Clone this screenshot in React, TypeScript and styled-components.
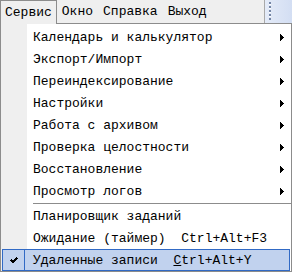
import React from 'react'
import styled, { createGlobalStyle, css } from 'styled-components'

const GlobalStyle = createGlobalStyle`
  html, body {
    margin: 0;
    padding: 0;
    background: #ffffff;
    overflow: hidden;
  }
`

const Screen = styled.div`
  width: 292px;
  height: 272px;
  display: flex;
  flex-direction: column;
  font-family: 'Liberation Mono', 'DejaVu Sans Mono', monospace;
  font-size: 13px;
  color: #000000;
`

const MenuBar = styled.div`
  display: flex;
  height: 23px;
  background: #efefef;
  position: relative;
  z-index: 2;
`

const TopItem = styled.div<{ $open?: boolean }>`
  box-sizing: border-box;
  height: 23px;
  padding: 0 5px;
  line-height: 24px;
  white-space: pre;
  ${(p) =>
    p.$open &&
    css`
      height: 24px;
      padding: 0 4px;
      line-height: 23px;
      border: 1px solid #8c8c8c;
      border-bottom: none;
      background: #efefef;
    `}
`

const BarFill = styled.div`
  flex: 1;
`

const ToolbarStub = styled.div`
  width: 28px;
  border-left: 1px solid #a9a9a9;
  background: linear-gradient(to right, #e4ebf8, #d3def3);
  display: flex;
  padding: 2px 0 0 4px;
  box-sizing: border-box;
`

const Grip = styled.div`
  width: 2px;
  height: 18px;
  background: repeating-linear-gradient(to bottom, #7586a6 0 2px, #ffffff 2px 3px, transparent 3px 4px);
`

const Popup = styled.div`
  flex: 1;
  box-sizing: border-box;
  border: 1px solid #8c8c8c;
  padding-top: 2px;
  background: linear-gradient(to right, #efefef 26px, #ffffff 26px);
  display: flex;
  flex-direction: column;
`

const Row = styled.div<{ $active?: boolean }>`
  display: flex;
  align-items: center;
  box-sizing: border-box;
  height: 22px;
  padding: 0 6px 0 32px;
  ${(p) =>
    p.$active &&
    css`
      margin: 0 1px;
      padding: 0 6px 0 0;
      border: 1px solid #316ac5;
      background: #c1d2ee;
    `}
`

const Label = styled.span`
  white-space: pre;
`

const CheckCell = styled.div`
  width: 21px;
  height: 100%;
  border-right: 1px solid #316ac5;
  display: flex;
  align-items: center;
  justify-content: center;
  margin-right: 8px;
`

const Arrow = styled.svg`
  margin-left: auto;
  margin-right: 1px;
`

const Separator = styled.div`
  height: 1px;
  margin: 1px 0 1px 32px;
  background: #8c8c8c;
`

const items = [
  'Календарь и калькулятор',
  'Экспорт/Импорт',
  'Переиндексирование',
  'Настройки',
  'Работа с архивом',
  'Проверка целостности',
  'Восстановление',
  'Просмотр логов',
]

const SubArrow = () => (
  <Arrow width='4' height='7' viewBox='0 0 4 7' shapeRendering='crispEdges'>
    <polygon points='0,0 4,3.5 0,7' fill='#000' />
  </Arrow>
)

const App = () => (
  <>
    <GlobalStyle />
    <Screen>
      <MenuBar>
        <TopItem $open>Сервис</TopItem>
        <TopItem>Окно</TopItem>
        <TopItem>Справка</TopItem>
        <TopItem>Выход</TopItem>
        <BarFill />
        <ToolbarStub>
          <Grip />
        </ToolbarStub>
      </MenuBar>
      <Popup>
        {items.map((label) => (
          <Row key={label}>
            <Label>{label}</Label>
            <SubArrow />
          </Row>
        ))}
        <Separator />
        <Row>
          <Label>Планировщик заданий</Label>
        </Row>
        <Row>
          <Label>Ожидание (таймер)  Ctrl+Alt+F3</Label>
        </Row>
        <Row $active>
          <CheckCell>
            <svg width='8' height='7' viewBox='0 0 8 7' shapeRendering='crispEdges'>
              <polyline points='1,3 3,5 7,1' fill='none' stroke='#000' strokeWidth='1.6' />
            </svg>
          </CheckCell>
          <Label>
            Удаленные записи  <u>C</u>trl+Alt+Y
          </Label>
        </Row>
      </Popup>
    </Screen>
  </>
)

export default App
